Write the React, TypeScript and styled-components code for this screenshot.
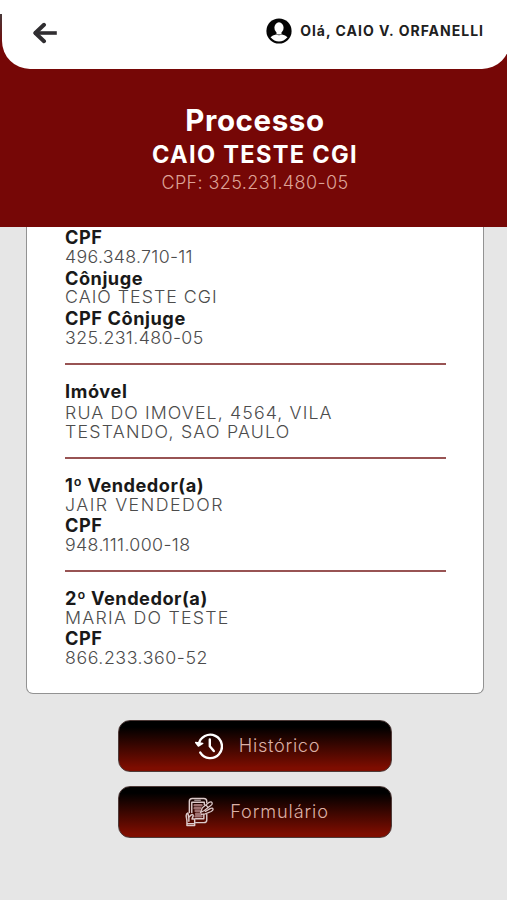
import React from 'react';
import styled, { createGlobalStyle } from 'styled-components';

const GlobalStyle = createGlobalStyle`
  * { box-sizing: border-box; }
  body { margin: 0; background: #e6e6e6; font-family: Inter, "Open Sans", sans-serif; }
`;

const Page = styled.main`
  display: flex;
  flex-direction: column;
  width: 507px;
  height: 900px;
  overflow: hidden;
  background: #e6e6e6;
`;

const Hero = styled.header`
  flex: none;
  height: 227px;
  overflow: hidden;
  background: linear-gradient(#ffffff 14px, #49393a 14px, #760706 46px);
`;

const Toolbar = styled.div`
  display: flex;
  align-items: center;
  justify-content: space-between;
  width: 508px;
  height: 69px;
  margin-left: 2px;
  padding: 0 27px 7px 30px;
  background: #ffffff;
  border-radius: 0 0 28px 28px;
`;

const BackButton = styled.button`
  display: flex;
  padding: 3px 0 0;
  border: 0;
  background: none;
`;

const User = styled.div`
  display: flex;
  align-items: center;
  gap: 8px;
`;

const UserName = styled.span`
  color: #202020;
  font-size: 14px;
  font-weight: 700;
  line-height: 20px;
  letter-spacing: 1px;
  margin-right: -1px;
  white-space: nowrap;
`;

const Heading = styled.div`
  display: flex;
  flex-direction: column;
  align-items: center;
  padding: 34px 0 0 3px;
  color: #ffffff;
  white-space: nowrap;
`;

const Title = styled.h1`
  margin: 0;
  font-size: 29.5px;
  font-weight: 700;
  line-height: 35px;
  letter-spacing: 0.6px;
`;

const ClientName = styled.h2`
  margin: 0;
  font-size: 23.6px;
  font-weight: 700;
  line-height: 33px;
  letter-spacing: 1.3px;
`;

const ClientCpf = styled.p`
  margin: 0;
  color: #dda297;
  font-size: 18px;
  font-weight: 300;
  line-height: 24px;
  letter-spacing: 0.38px;
`;

const Card = styled.section`
  flex: none;
  width: 458px;
  height: 467px;
  margin: -0.5px 0 0 26px;
  padding: 2.5px 37px 0 38px;
  background: #ffffff;
  border: 1.5px solid #929292;
  border-top: 0;
  border-radius: 0 0 7px 7px;
`;

const Group = styled.dl`
  margin: 0;
  padding-bottom: 15.5px;

  & + & {
    padding-top: 17.5px;
    border-top: 2px solid #985353;
  }
`;

const Label = styled.dt<{ $tracking: number }>`
  color: #191919;
  font-size: 18.2px;
  font-weight: 700;
  line-height: 17.75px;
  padding-bottom: 1px;
  letter-spacing: ${p => p.$tracking}px;
  white-space: nowrap;

  dd + & { margin-top: 3px; }
`;

const Value = styled.dd<{ $tracking: number; $spaced?: boolean }>`
  margin: ${p => (p.$spaced ? 3 : 0)}px 0 0;
  color: #4c4c4c;
  font-size: 17.8px;
  font-weight: 300;
  line-height: 18.75px;
  letter-spacing: ${p => p.$tracking}px;
  white-space: nowrap;
`;

const Actions = styled.nav`
  display: flex;
  flex-direction: column;
  align-items: center;
  gap: 14px;
  padding: 26px 0 0 3px;
`;

const ActionButton = styled.button`
  display: flex;
  align-items: center;
  justify-content: center;
  gap: 16px;
  width: 274px;
  height: 52px;
  padding: 0 0 0 4px;
  color: #dcb0a6;
  background: linear-gradient(#000000 12%, #7e0d00 94%);
  border: 1px solid #4e3a38;
  border-radius: 12px;
  font-family: inherit;
`;

const ActionText = styled.span<{ $tracking: number }>`
  padding-bottom: 2px;
  font-size: 18.2px;
  font-weight: 300;
  line-height: 24px;
  letter-spacing: ${p => p.$tracking}px;
`;

const BackIcon = () => (
  <svg width="26" height="22" viewBox="0 0 26 22" fill="none" stroke="#302e31" strokeWidth="4" strokeLinecap="round" strokeLinejoin="round">
    <path d="M12 2.8 3.3 11l8.700 8.200" />
    <path d="M4 11h19" strokeLinecap="square" strokeWidth="3.600" />
  </svg>
);

const UserIcon = () => (
  <svg width="26" height="26" viewBox="0 0 26 26">
    <circle cx="13" cy="13" r="12.600" fill="#050505" />
    <ellipse cx="13" cy="9.700" rx="4.600" ry="5.400" fill="#fff" />
    <path d="M10.500 13h5v3.500h-5z" fill="#fff" />
    <path d="M4.500 19.300q2-2.300 5.500-2.900 3 1.500 6 0 3.500.6 5.500 2.900c-4.600 5.600-12.400 5.600-17 0z" fill="#fff" />
  </svg>
);

const HistoryIcon = () => (
  <svg width="29" height="28" viewBox="0 0 29 28" fill="none" stroke="#fff" strokeWidth="2.400" strokeLinecap="round" strokeLinejoin="round">
    <path d="M4.700 12.500A11.700 11.700 0 1 1 6.300 20.600" />
    <path d="M1.700 10.600 4.400 14l4.300-2.600z" fill="#fff" strokeWidth="1.500" />
    <path d="M15.800 7.500v6.800l4 4.700" />
  </svg>
);

const FormIcon = () => (
  <svg width="29" height="30" viewBox="0 0 30 31" fill="none" stroke="#dccaca" strokeWidth="1.500" strokeLinecap="round" strokeLinejoin="round">
    <path d="M4.500 16V4.500q0-3 3-3h12q3 0 3 3V6M22.500 18v6q0 2.500-3 2.500H11" />
    <path d="M7 16V5.500h13V8M19.500 18v4.500H11" />
    <path d="M10 3.300h6" strokeWidth="1" />
    <path d="M10 8.500h7M10 11.500h6M11 14.500h4M11.500 17.500h5M11 20h6" stroke="#a07272" strokeWidth="2.600" />
    <path d="m16 16 2-5 7-5.500q2.500-1 3 .5t-1 2.500L20 14zM22 8.500l2 2.500M21 15l5-3q2.500-1 3 .3T27 15l-6 2.500-4 .5" strokeWidth="1.300" />
    <path d="M2 29.500v-5l-.8-5q0-2.500 1.800-3l.8 4.500 2.700-2.500q2-1 2 1l-1.300 3.300H10v6.700zM4 21v4M3 27.500h6" />
  </svg>
);

export default function App() {
  return (
    <Page>
      <GlobalStyle />
      <Hero>
        <Toolbar>
          <BackButton aria-label="Voltar"><BackIcon /></BackButton>
          <User>
            <UserIcon />
            <UserName>Olá, CAIO V. ORFANELLI</UserName>
          </User>
        </Toolbar>
        <Heading>
          <Title>Processo</Title>
          <ClientName>CAIO TESTE CGI</ClientName>
          <ClientCpf>CPF: 325.231.480-05</ClientCpf>
        </Heading>
      </Hero>
      <Card>
        <Group>
          <Label $tracking={0.5}>CPF</Label>
          <Value $tracking={0.3}>496.348.710-11</Value>
          <Label $tracking={0.5}>Cônjuge</Label>
          <Value $tracking={1}>CAIO TESTE CGI</Value>
          <Label $tracking={0.55}>CPF Cônjuge</Label>
          <Value $tracking={0.4}>325.231.480-05</Value>
        </Group>
        <Group>
          <Label $tracking={0.6}>Imóvel</Label>
          <Value $tracking={1.1} $spaced>RUA DO IMOVEL, 4564, VILA</Value>
          <Value $tracking={1.2}>TESTANDO, SAO PAULO</Value>
        </Group>
        <Group>
          <Label $tracking={0.5}>1º Vendedor(a)</Label>
          <Value $tracking={1.5}>JAIR VENDEDOR</Value>
          <Label $tracking={0.5}>CPF</Label>
          <Value $tracking={0.37}>948.111.000-18</Value>
        </Group>
        <Group>
          <Label $tracking={0.5}>2º Vendedor(a)</Label>
          <Value $tracking={1.25}>MARIA DO TESTE</Value>
          <Label $tracking={0.5}>CPF</Label>
          <Value $tracking={0.55}>866.233.360-52</Value>
        </Group>
      </Card>
      <Actions>
        <ActionButton>
          <HistoryIcon />
          <ActionText $tracking={0.7}>Histórico</ActionText>
        </ActionButton>
        <ActionButton>
          <FormIcon />
          <ActionText $tracking={0.85}>Formulário</ActionText>
        </ActionButton>
      </Actions>
    </Page>
  );
}
